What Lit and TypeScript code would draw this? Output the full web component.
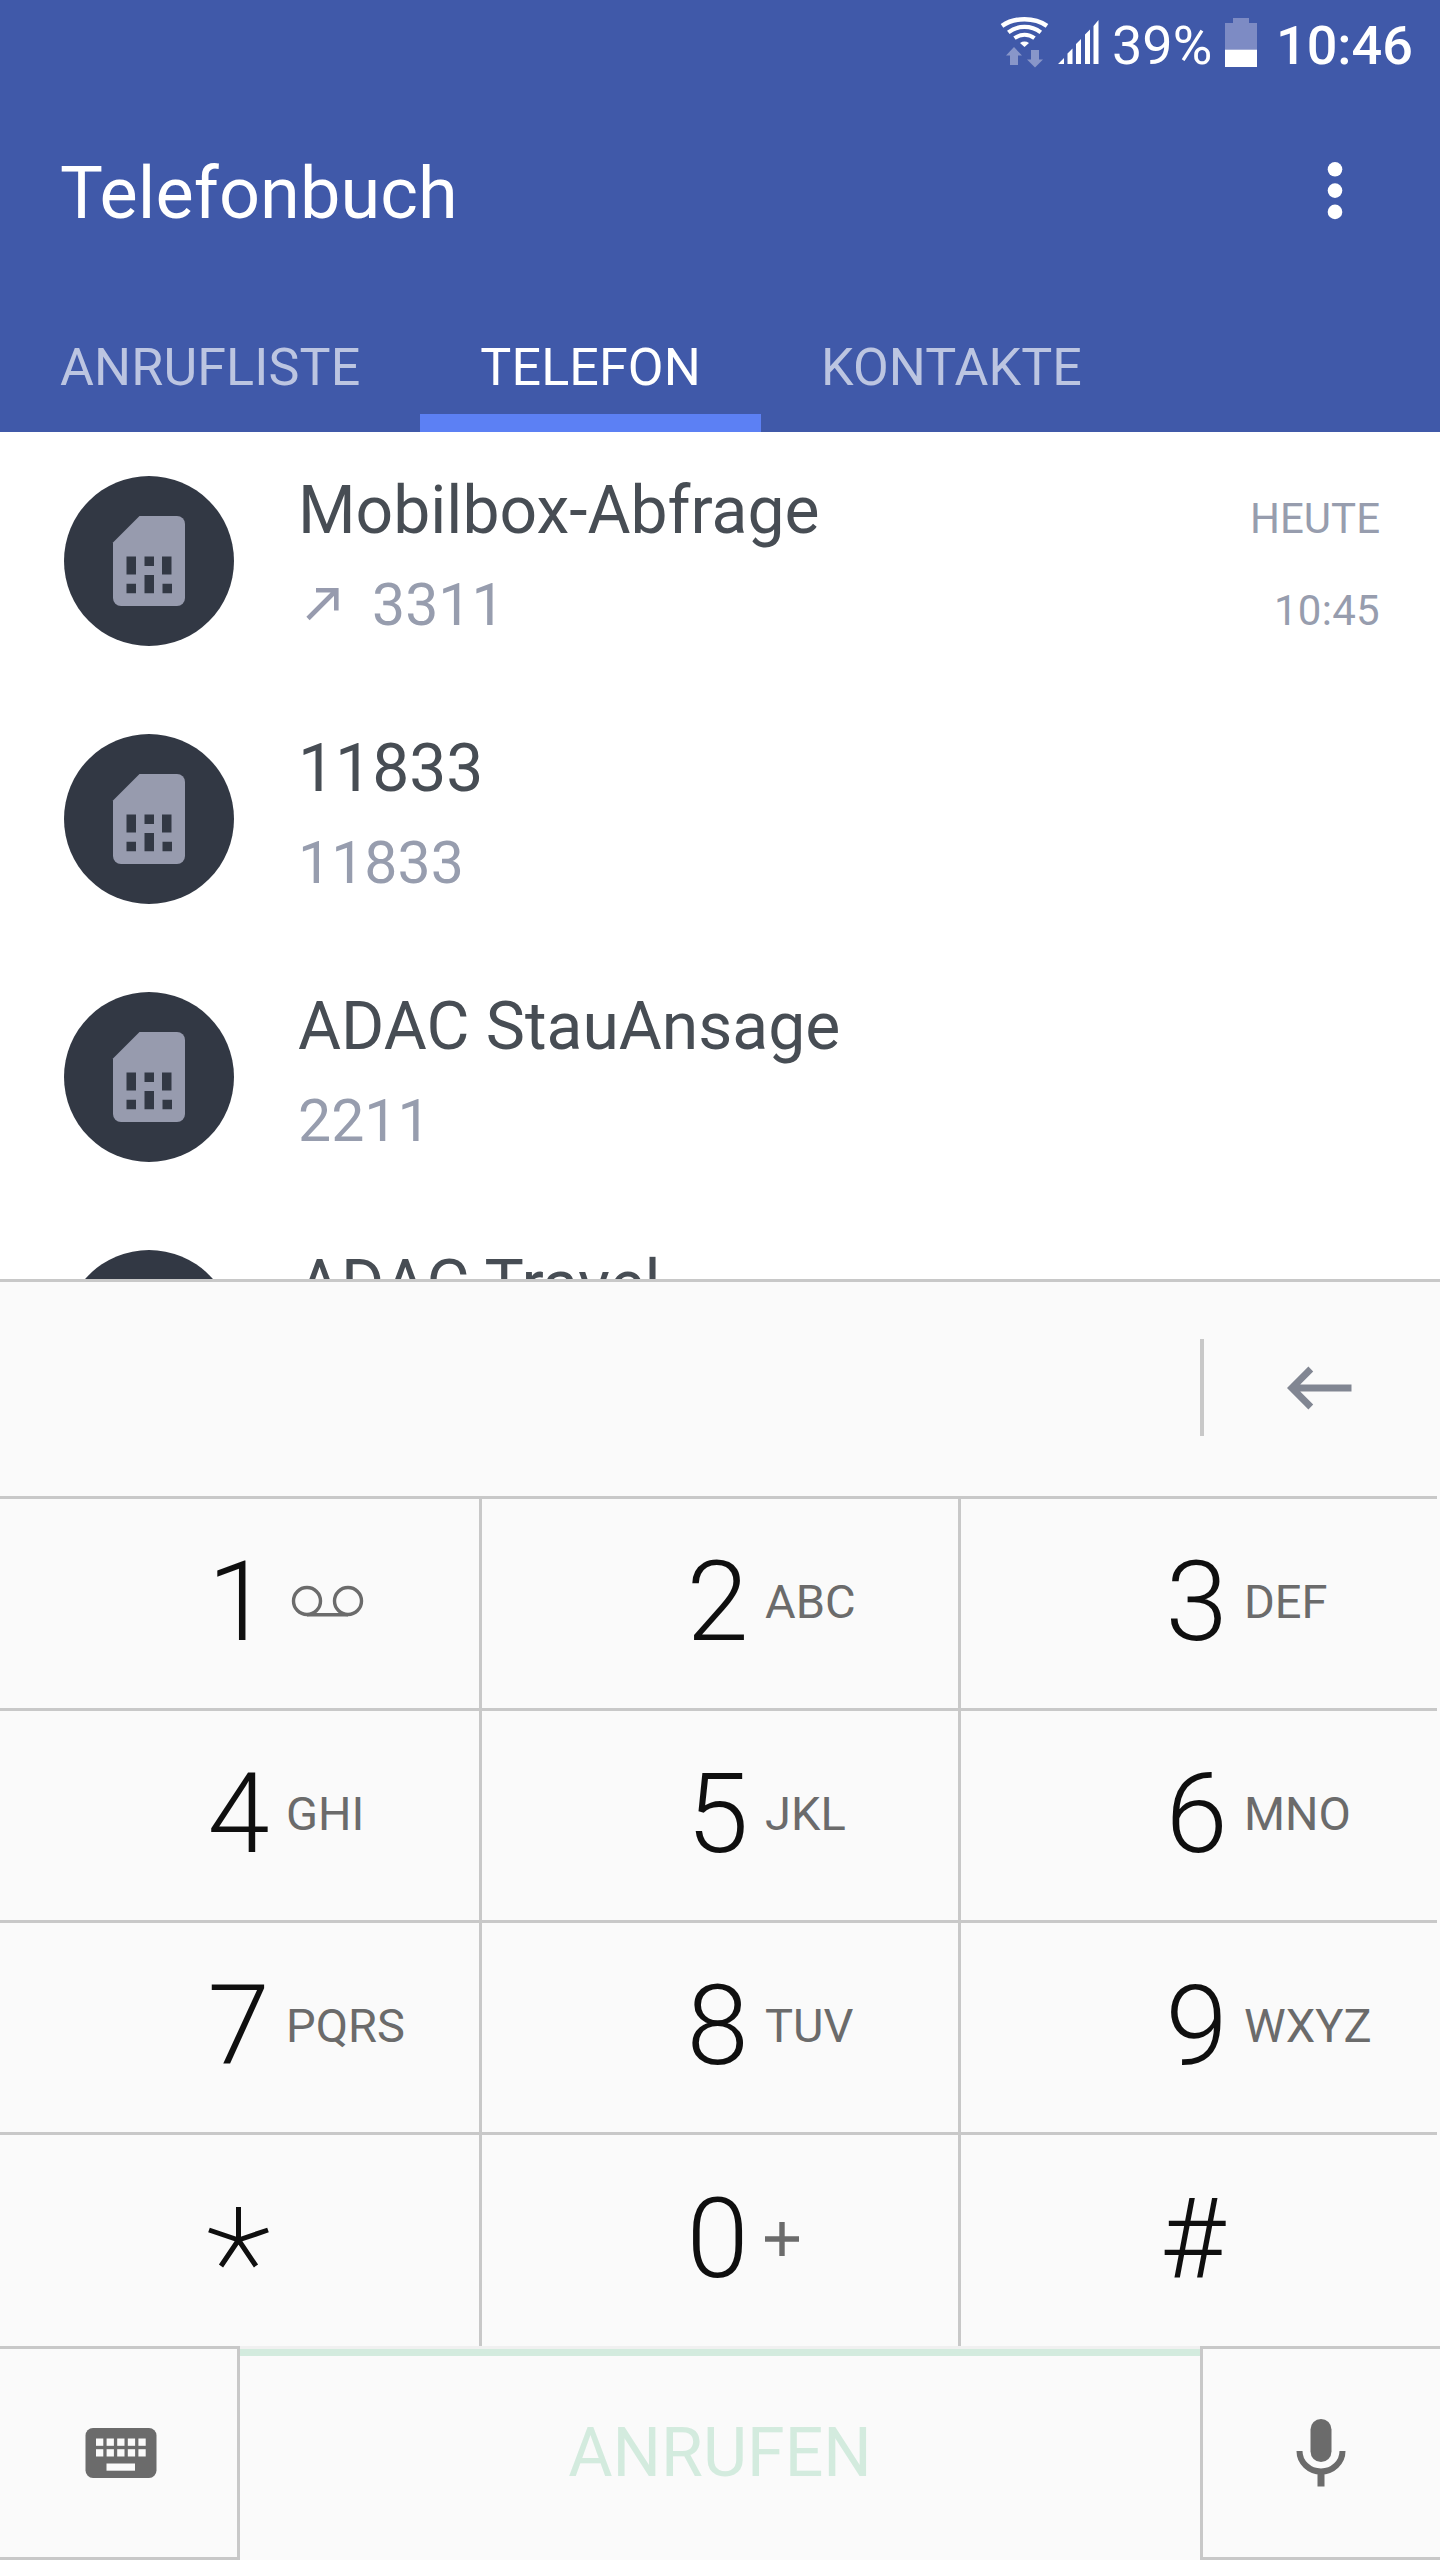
import { LitElement, html, css, svg, nothing } from "lit";
import { customElement, property } from "lit/decorators.js";

interface Contact {
  name: string;
  number: string;
  outgoing?: boolean;
  day?: string;
  time?: string;
}

const CONTACTS: Contact[] = [
  { name: "Mobilbox-Abfrage", number: "3311", outgoing: true, day: "HEUTE", time: "10:45" },
  { name: "11833", number: "11833" },
  { name: "ADAC StauAnsage", number: "2211" },
  { name: "ADAC Travel", number: "" },
];

const TABS = ["ANRUFLISTE", "TELEFON", "KONTAKTE"];

const KEYS: [string, string][] = [
  ["1", "voicemail"], ["2", "ABC"], ["3", "DEF"],
  ["4", "GHI"], ["5", "JKL"], ["6", "MNO"],
  ["7", "PQRS"], ["8", "TUV"], ["9", "WXYZ"],
  ["*", ""], ["0", "+"], ["#", ""],
];

@customElement("status-bar")
export class StatusBar extends LitElement {
  static styles = css`
    :host { display: flex; height: 88px; justify-content: flex-end; color: #fff; box-sizing: border-box; padding-right: 27px; }
    .icons { flex: none; }
    .text { font-size: 54px; line-height: 66px; padding-top: 13px; white-space: nowrap; }
    .percent { width: 112px; }
    .battery { flex: none; }
    .clock { font-weight: 500; margin-left: 18px; }
  `;
  render() {
    return html`
      <svg class="icons" width="112" height="80" viewBox="1000 0 112 80">
        <g fill="none" stroke="#fff">
          <path stroke-width="4.500" d="M1002 25.800Q1011.500 19.200 1024.500 19.200T1047 25.800"/>
          <path stroke-width="4.200" d="M1008.300 32.400Q1015.500 26.900 1024.500 26.900T1040.800 32.400"/>
          <path stroke-width="4" d="M1014.500 38.200Q1019 34.800 1024.500 34.800T1034.500 38.200"/>
        </g>
        <path fill="#fff" d="M1020 43Q1024.500 40.200 1029 43L1024.500 47Z"/>
        <path fill="#8896c9" d="M1014 47l8 8.500h-4V65h-8v-9.500h-4zM1031 50h8v9.500h4l-8 8-8-8h4z"/>
        <path fill="#fff" d="M1058 64l6-6v6zM1067.500 64V53.500l5-5V64zM1076 64V44l5-5v25zM1085 64V34.500l5-5V64zM1093.500 64V26l5-6v44z"/>
      </svg>
      <span class="text percent">39%</span>
      <svg class="battery" width="34" height="80" viewBox="1224 0 34 80">
        <path fill="#7d8bc4" d="M1225 23h8v-5h16v5h8v27h-32z"/>
        <path fill="#fff" d="M1225 49.700h32V67h-32z"/>
      </svg>
      <span class="text clock">10:46</span>
    `;
  }
}

@customElement("app-header")
export class AppHeader extends LitElement {
  static styles = css`
    :host { display: flex; flex-direction: column; height: 432px; background: #4059a9; color: #fff; }
    .title-row { display: flex; justify-content: space-between; align-items: center; height: 212px; padding: 0 90px 0 60px; }
    .title { font-size: 72px; line-height: 84px; font-weight: 400; letter-spacing: 0.1px; margin: 0; }
    .tabs { display: flex; height: 132px; }
    .tab { box-sizing: border-box; height: 132px; padding: 4px 60px 0; font-size: 52px; line-height: 128px; letter-spacing: 0.12px; color: #bcc5e1; border-bottom: 18px solid transparent; }
    .active { color: #fff; border-bottom-color: #5c80f4; }
  `;
  render() {
    return html`
      <status-bar></status-bar>
      <div class="title-row">
        <h1 class="title">Telefonbuch</h1>
        <svg width="30" height="70" viewBox="0 0 30 70" fill="#fff">
          <circle cx="15" cy="10.300" r="7.300"/><circle cx="15" cy="31.600" r="7.300"/><circle cx="15" cy="52.900" r="7.300"/>
        </svg>
      </div>
      <nav class="tabs">
        ${TABS.map((t) => html`<div class="tab ${t === "TELEFON" ? "active" : ""}">${t}</div>`)}
      </nav>
    `;
  }
}

@customElement("contact-row")
export class ContactRow extends LitElement {
  @property({ attribute: false }) contact!: Contact;
  static styles = css`
    :host { display: flex; flex: none; height: 258px; box-sizing: border-box; padding: 0 60px 0 64px; }
    .avatar { flex: none; width: 170px; height: 170px; margin-top: 44px; }
    .main { flex: 1; margin-left: 64px; padding-top: 40px; }
    .name { font-size: 66px; line-height: 78px; color: #474d54; white-space: nowrap; }
    .number { display: flex; align-items: center; font-size: 59px; line-height: 70px; margin-top: 20px; color: #979dae; }
    .arrow { margin: 0 32px 2px 8px; }
    .meta { text-align: right; font-size: 42px; color: #979dae; padding-top: 62px; line-height: 50px; }
    .time { margin-top: 42px; letter-spacing: 0.3px; }
  `;
  render() {
    const c = this.contact;
    return html`
      <svg class="avatar" viewBox="0 0 170 170">
        <circle cx="85" cy="85" r="85" fill="#323844"/>
        <path fill="#979bae" d="M75.500 40H113a8 8 0 0 1 8 8v74a8 8 0 0 1-8 8H57a8 8 0 0 1-8-8V66.500z"/>
        <path fill="#323844" d="M62.500 80.500h9.500v18h-9.500zM80.500 80.500H90V90h-9.500zM98 80.500h9.500v18H98zM62.500 107.700h9.500v9.500h-9.500zM80.500 99H90v18.200h-9.500zM98.500 107.700h9.500v9.500h-9.500z"/>
      </svg>
      <div class="main">
        <div class="name">${c.name}</div>
        <div class="number">
          ${c.outgoing
            ? html`<svg class="arrow" width="34" height="34" viewBox="0 0 34 34" fill="none" stroke="#979bae" stroke-width="4.600"><path d="M2 31.500L30 3.500M10 3.300H30.300V23.500"/></svg>`
            : nothing}
          <span>${c.number}</span>
        </div>
      </div>
      ${c.day ? html`<div class="meta"><div>${c.day}</div><div class="time">${c.time}</div></div>` : nothing}
    `;
  }
}

@customElement("dial-key")
export class DialKey extends LitElement {
  @property() digit = "";
  @property() letters = "";
  static styles = css`
    :host { display: flex; align-items: center; box-sizing: border-box; padding: 0 0 4px 207px; height: 209px; color: #0f0f0f; }
    .digit { width: 63px; text-align: center; font-size: 112px; font-weight: 300; line-height: 132px; }
    .hash { display: flex; justify-content: center; margin-left: -4px; }
    .star { margin-bottom: 4px; }
    .letters { margin-left: 16px; font-size: 47px; line-height: 56px; color: #6b6b6b; }
    .voicemail { margin-left: 21px; }
  `;
  private glyph() {
    if (this.digit === "*")
      return html`<svg class="star" width="63" height="66" viewBox="0 0 63 66" stroke="#0f0f0f" stroke-width="5"><path d="M31.500 3V36M31.500 36L2 26M31.500 36L61 26M31.500 36L14 62M31.500 36L49 62"/></svg>`;
    return html`<span class="digit ${this.digit === "#" ? "hash" : ""}">${this.digit}</span>`;
  }
  private sub() {
    if (this.letters === "voicemail")
      return html`<svg class="voicemail" width="73" height="34" viewBox="0 0 73 34" fill="none" stroke="#6b6b6b" stroke-width="3.400">
        ${svg`<circle cx="16" cy="16" r="13.500"/><circle cx="57" cy="16" r="13.500"/><path d="M16 29.700H57"/>`}
      </svg>`;
    if (this.letters === "+")
      return html`<svg class="letters" width="34" height="34" viewBox="0 0 34 34" stroke="#6b6b6b" stroke-width="5.400"><path d="M0 17H34M17 0V34"/></svg>`;
    return this.letters ? html`<span class="letters">${this.letters}</span>` : nothing;
  }
  render() {
    return html`${this.glyph()}${this.sub()}`;
  }
}

@customElement("app-root")
export class AppRoot extends LitElement {
  static styles = css`
    :host { display: flex; flex-direction: column; width: 1440px; height: 2560px; overflow: hidden; background: #fff; font-family: Roboto, sans-serif; }
    app-header { flex: none; }
    .list { display: flex; flex-direction: column; height: 847px; overflow: hidden; flex: none; }
    .entry { display: flex; align-items: center; justify-content: flex-end; box-sizing: border-box; height: 217px; padding-bottom: 3px; border-top: 3px solid #c8c8c8; background: #fafafa; flex: none; }
    .divider { width: 4px; height: 97px; background: #c8c8c8; margin-right: 82px; }
    .back { margin-right: 88px; }
    .pad { display: grid; grid-template-columns: 479px 476px 476px; column-gap: 3px; row-gap: 3px; width: 1437px; box-sizing: border-box; height: 850px; padding-top: 3px; background: #c8c8c8; }
    .pad-wrap { background: #fafafa; height: 850px; flex: none; }
    .key { background: #fafafa; }
    .key.inner { padding-left: 204px; }
    .key.last-row { height: 211px; }
    .actions { display: grid; grid-template-columns: 240px 960px 240px; height: 214px; flex: none; background: #fafafa; }
    .side { display: flex; align-items: center; justify-content: center; box-sizing: border-box; border: 0 solid #c8c8c8; border-width: 3px 0; color: #6b6b6b; }
    .left { border-right-width: 3px; padding-left: 4px; }
    .right { border-left-width: 3px; padding-right: 2px; padding-bottom: 1px; }
    .call { display: flex; align-items: center; justify-content: center; box-sizing: border-box; padding-bottom: 4px; border-top: 3px solid #f0f0f0; box-shadow: inset 0 7px #d3ebde; color: #d3ebde; font-size: 68px; }
  `;
  render() {
    return html`
      <app-header></app-header>
      <main class="list">
        ${CONTACTS.map((c) => html`<contact-row .contact=${c}></contact-row>`)}
      </main>
      <div class="entry">
        <div class="divider"></div>
        <svg class="back" width="66" height="44" viewBox="0 0 66 44" fill="none" stroke="#818692" stroke-width="6.800"><path d="M65.500 22H6M24.800 3L5.800 22L24.800 41"/></svg>
      </div>
      <div class="pad-wrap">
        <div class="pad">
          ${KEYS.map(([d, l], i) => html`<dial-key class="key ${i > 8 ? "last-row" : ""} ${i % 3 ? "inner" : ""}" digit=${d} letters=${l}></dial-key>`)}
        </div>
      </div>
      <div class="actions">
        <div class="side left">
          <svg width="72" height="52" viewBox="0 0 72 52">
            <rect x="0.500" y="1" width="71" height="50" rx="7.500" fill="#6b6b6b"/>
            ${[0, 1].map((r) => [0, 1, 2, 3, 4].map((c) => svg`<rect x=${11 + c * 10.6} y=${11.5 + r * 10.7} width="7.300" height="7.300" fill="#fafafa"/>`))}
            <rect x="21.500" y="36.500" width="28.500" height="7.200" fill="#fafafa"/>
          </svg>
        </div>
        <div class="call">ANRUFEN</div>
        <div class="side right">
          <svg width="50" height="70" viewBox="0 0 50 70">
            <rect x="14.500" y="1" width="21" height="43" rx="10.500" fill="#6b6b6b"/>
            <path fill="none" stroke="#6b6b6b" stroke-width="6" d="M3.500 33a21.500 20.500 0 0 0 43 0"/>
            <path fill="#6b6b6b" d="M21.500 54h7v14.500h-7z"/>
          </svg>
        </div>
      </div>
    `;
  }
}
